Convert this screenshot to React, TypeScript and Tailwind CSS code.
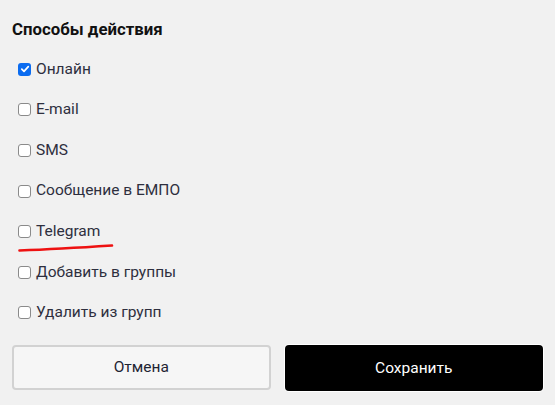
import { useState } from "react"

const options = [
    { id: "online", label: "Онлайн", checked: true },
    { id: "email", label: "E-mail", checked: false },
    { id: "sms", label: "SMS", checked: false },
    { id: "empo", label: "Сообщение в ЕМПО", checked: false },
    { id: "telegram", label: "Telegram", checked: false, marked: true },
    { id: "add", label: "Добавить в группы", checked: false },
    { id: "remove", label: "Удалить из групп", checked: false },
]

function Box({ checked }: { checked: boolean }) {
    if (checked) {
        return (
            <span className="w-[13px] h-[13px] rounded-[3px] bg-[#0b6cf0] flex items-center justify-center shrink-0">
                <svg width="10" height="10" viewBox="0 0 10 10">
                    <path d="M1.8 5.2 L4 7.4 L8.3 2.6" fill="none" stroke="white" strokeWidth="1.7" strokeLinecap="round" strokeLinejoin="round" />
                </svg>
            </span>
        )
    }
    return <span className="w-[13px] h-[13px] rounded-[3px] border border-[#8a8a8a] bg-white shrink-0" />
}

export default function App() {
    const [state, setState] = useState(options)

    const toggle = (id: string) => {
        setState((s) => s.map((o) => (o.id === id ? { ...o, checked: !o.checked } : o)))
    }

    return (
        <div className="w-[555px] h-[405px] bg-[#f1f1f1] px-[12px] pt-[19px] text-[#1a1a1a]" style={{ fontFamily: "Roboto, 'Noto Sans', sans-serif" }}>
            <h2 className="h-[20px] leading-[20px] text-[16.8px] font-bold text-[#111]">Способы действия</h2>

            <div className="mt-[10px] flex flex-col">
                {state.map((o) => (
                    <div key={o.id} className="h-[40.6px] flex items-center pl-[6px] relative">
                        <label className="flex items-center gap-[5px] cursor-pointer" onClick={() => toggle(o.id)}>
                            <Box checked={o.checked} />
                            <span className="text-[15.5px] text-[#2e2f3e]">{o.label}</span>
                        </label>
                        {o.marked && (
                            <svg className="absolute left-[6px] top-[32px]" width="96" height="10" viewBox="0 0 96 10">
                                {/* red underline annotation */}
                                <path d="M1.5 7.5 Q40 6 94 2.5" fill="none" stroke="#ee1111" strokeWidth="2.6" strokeLinecap="round" />
                            </svg>
                        )}
                    </div>
                ))}
            </div>

            <div className="mt-[12px] grid grid-cols-2 gap-[14px]">
                <button className="h-[45px] rounded-[4px] border-2 border-[#d2d2d2] bg-[#f6f6f6] text-[15.5px] text-[#1f2433]">
                    Отмена
                </button>
                <button className="h-[46px] rounded-[4px] bg-black text-white text-[15.5px] ring-1 ring-white">
                    Сохранить
                </button>
            </div>
        </div>
    )
}
